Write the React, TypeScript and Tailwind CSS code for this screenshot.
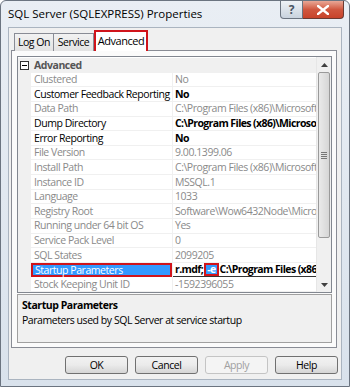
const rows: { label: string; value: string; dark?: boolean; bold?: boolean }[] = [
  { label: "Clustered", value: "No" },
  { label: "Customer Feedback Reporting", value: "No", dark: true, bold: true },
  { label: "Data Path", value: "C:\\Program Files (x86)\\Microsoft" },
  { label: "Dump Directory", value: "C:\\Program Files (x86)\\Microsoft", dark: true, bold: true },
  { label: "Error Reporting", value: "No", dark: true, bold: true },
  { label: "File Version", value: "9.00.1399.06" },
  { label: "Install Path", value: "C:\\Program Files (x86)\\Microsoft" },
  { label: "Instance ID", value: "MSSQL.1" },
  { label: "Language", value: "1033" },
  { label: "Registry Root", value: "Software\\Wow6432Node\\Micro" },
  { label: "Running under 64 bit OS", value: "Yes" },
  { label: "Service Pack Level", value: "0" },
  { label: "SQL States", value: "2099205" },
];

function Row({ label, value, dark, bold }: { label: string; value: string; dark?: boolean; bold?: boolean }) {
  const color = dark ? "text-black" : "text-[#8a8a8a]";
  return (
    <div className="flex h-[14.67px] w-[298px] items-stretch">
      <div className="w-[13px] shrink-0 bg-[#f0f0f0]" />
      <div className={`flex w-[141px] shrink-0 items-center overflow-hidden whitespace-nowrap border-b border-[#f0f0f0] pl-[3px] ${color}`}>
        {label}
      </div>
      <div className="w-px shrink-0 bg-[#f0f0f0]" />
      <div
        className={`flex w-[143px] shrink-0 items-center overflow-hidden whitespace-nowrap border-b border-[#f0f0f0] pl-[2px] ${color} ${
          bold ? "font-bold tracking-[-0.6px]" : ""
        }`}
      >
        {value}
      </div>
    </div>
  );
}

function Button({ label, disabled }: { label: string; disabled?: boolean }) {
  return (
    <div
      className={`flex h-[18px] w-[63px] items-center justify-center rounded-[3px] border ${
        disabled
          ? "border-[#c4c4c4] bg-[#f4f4f4] text-[#a0a0a0]"
          : "border-[#707070] bg-gradient-to-b from-[#f2f2f2] via-[#ebebeb] to-[#d5d5d5] text-black"
      }`}
    >
      {label}
    </div>
  );
}

export default function App() {
  return (
    <div
      className="flex h-[387px] w-[350px] flex-col overflow-hidden rounded-t-[6px] border border-[#6b7480] bg-gradient-to-b from-[#e9eef4] to-[#d9e2ec] text-[10.5px] leading-none tracking-[-0.45px] text-black"
      style={{ fontFamily: '"Open Sans", "Noto Sans", sans-serif' }}
    >
      {/* Title bar */}
      <div className="flex h-[26px] shrink-0 items-start">
        <div className="pl-[7px] pt-[7px] text-[11.5px] tracking-normal text-black">SQL Server (SQLEXPRESS) Properties</div>
        <div className="ml-auto flex pr-[5px]">
          <div className="flex h-[18px] w-[23px] items-center justify-center rounded-bl-[4px] border border-t-0 border-[#6b7480] bg-gradient-to-b from-[#eef2f6] to-[#c9d3de] text-[12px] font-bold text-[#4a5563]">
            ?
          </div>
          <div className="flex h-[18px] w-[41px] items-center justify-center rounded-br-[4px] border border-l-0 border-t-0 border-[#6b3a32] bg-gradient-to-b from-[#e8a796] via-[#d0573f] to-[#c8432a]">
            <svg width="12" height="10" viewBox="0 0 12 10">
              <path d="M1 1 L11 9 M11 1 L1 9" stroke="#fff" strokeWidth="2.4" strokeLinecap="square" />
            </svg>
          </div>
        </div>
      </div>

      {/* Client area */}
      <div className="mx-[7px] flex h-[353px] flex-col border border-[#aab4c0] bg-[#f0f0f0] px-[2px]">
        {/* Tabs */}
        <div className="relative z-10 flex h-[22px] items-end pl-[3px]">
          <div className="-mb-px flex h-[18px] w-[40px] items-center justify-center border border-b-0 border-[#898c95] bg-gradient-to-b from-[#f2f2f2] to-[#e3e3e3]">
            Log On
          </div>
          <div className="-mb-px -ml-px flex h-[18px] w-[41px] items-center justify-center border border-b-0 border-[#898c95] bg-gradient-to-b from-[#f2f2f2] to-[#e3e3e3]">
            Service
          </div>
          <div className="-mb-px flex h-[21px] w-[54px] items-start justify-center border-2 border-b-0 border-[#d0141b] bg-white pt-[3px] text-[11px]">
            Advanced
          </div>
        </div>

        {/* Tab page */}
        <div className="flex h-[298px] w-[326px] flex-col border border-[#898c95] bg-[#fbfbfb] pl-[5px] pt-[5px]">
          {/* Property grid */}
          <div className="flex h-[237px] w-[315px] border border-[#828790] bg-white">
            <div className="flex w-[298px] flex-col pt-[1px]">
              {/* Category */}
              <div className="flex h-[14.67px] items-center bg-[#f0f0f0]">
                <div className="flex w-[13px] justify-center">
                  <div className="flex h-[9px] w-[9px] items-center justify-center border border-[#333] bg-white">
                    <div className="h-px w-[5px] bg-black" />
                  </div>
                </div>
                <div className="pl-[3px] font-bold text-[#555]">Advanced</div>
              </div>
              {rows.map((r) => (
                <Row key={r.label} {...r} />
              ))}
              {/* Selected row */}
              <div className="flex h-[14.67px] w-[298px] items-stretch">
                <div className="w-[13px] shrink-0 bg-[#f0f0f0]" />
                <div className="flex w-[141px] shrink-0 items-center whitespace-nowrap border-2 border-[#d0141b] bg-[#3399ff] pl-[2px] text-white">
                  Startup Parameters
                </div>
                <div className="w-px shrink-0 bg-[#f0f0f0]" />
                <div className="flex w-[143px] shrink-0 items-center overflow-hidden whitespace-nowrap border-b border-[#333] pl-[2px] font-bold tracking-[-0.6px] text-black">
                  r.mdf;
                  <span className="mx-px border-2 border-[#d0141b] bg-[#3399ff] px-px leading-[9px] text-white">-e</span>
                  C:\Program Files (x86\osc
                </div>
              </div>
              <Row label="Stock Keeping Unit ID" value="-1592396055" />
            </div>
            {/* Scrollbar */}
            <div className="flex w-[15px] shrink-0 flex-col border-l border-[#e6e6e6] bg-[#f0f0f0]">
              <div className="flex h-[15px] items-center justify-center">
                <svg width="7" height="4" viewBox="0 0 7 4">
                  <path d="M0 4 L3.5 0 L7 4 Z" fill="#404040" />
                </svg>
              </div>
              <div className="mx-[1px] flex h-[166px] flex-col items-center justify-center rounded-[2px] border border-[#9a9a9a] bg-gradient-to-r from-[#eaeaea] to-[#d6d6d6]">
                <div className="flex flex-col gap-[1px]">
                  <div className="h-px w-[6px] bg-[#777]" />
                  <div className="h-px w-[6px] bg-[#777]" />
                  <div className="h-px w-[6px] bg-[#777]" />
                  <div className="h-px w-[6px] bg-[#777]" />
                </div>
              </div>
              <div className="flex-1" />
              <div className="flex h-[15px] items-center justify-center">
                <svg width="7" height="4" viewBox="0 0 7 4">
                  <path d="M0 0 L7 0 L3.5 4 Z" fill="#404040" />
                </svg>
              </div>
            </div>
          </div>

          {/* Description */}
          <div className="mt-[1px] flex h-[49px] w-[315px] flex-col border border-[#a0a0a0] bg-[#f0f0f0] px-[4px] pt-[5px]">
            <div className="font-bold">Startup Parameters</div>
            <div className="mt-[4px]">Parameters used by SQL Server at service startup</div>
          </div>
        </div>

        {/* Buttons */}
        <div className="mt-[8px] flex justify-end gap-[7px] pr-[1px]">
          <Button label="OK" />
          <Button label="Cancel" />
          <Button label="Apply" disabled />
          <Button label="Help" />
        </div>
      </div>
    </div>
  );
}
